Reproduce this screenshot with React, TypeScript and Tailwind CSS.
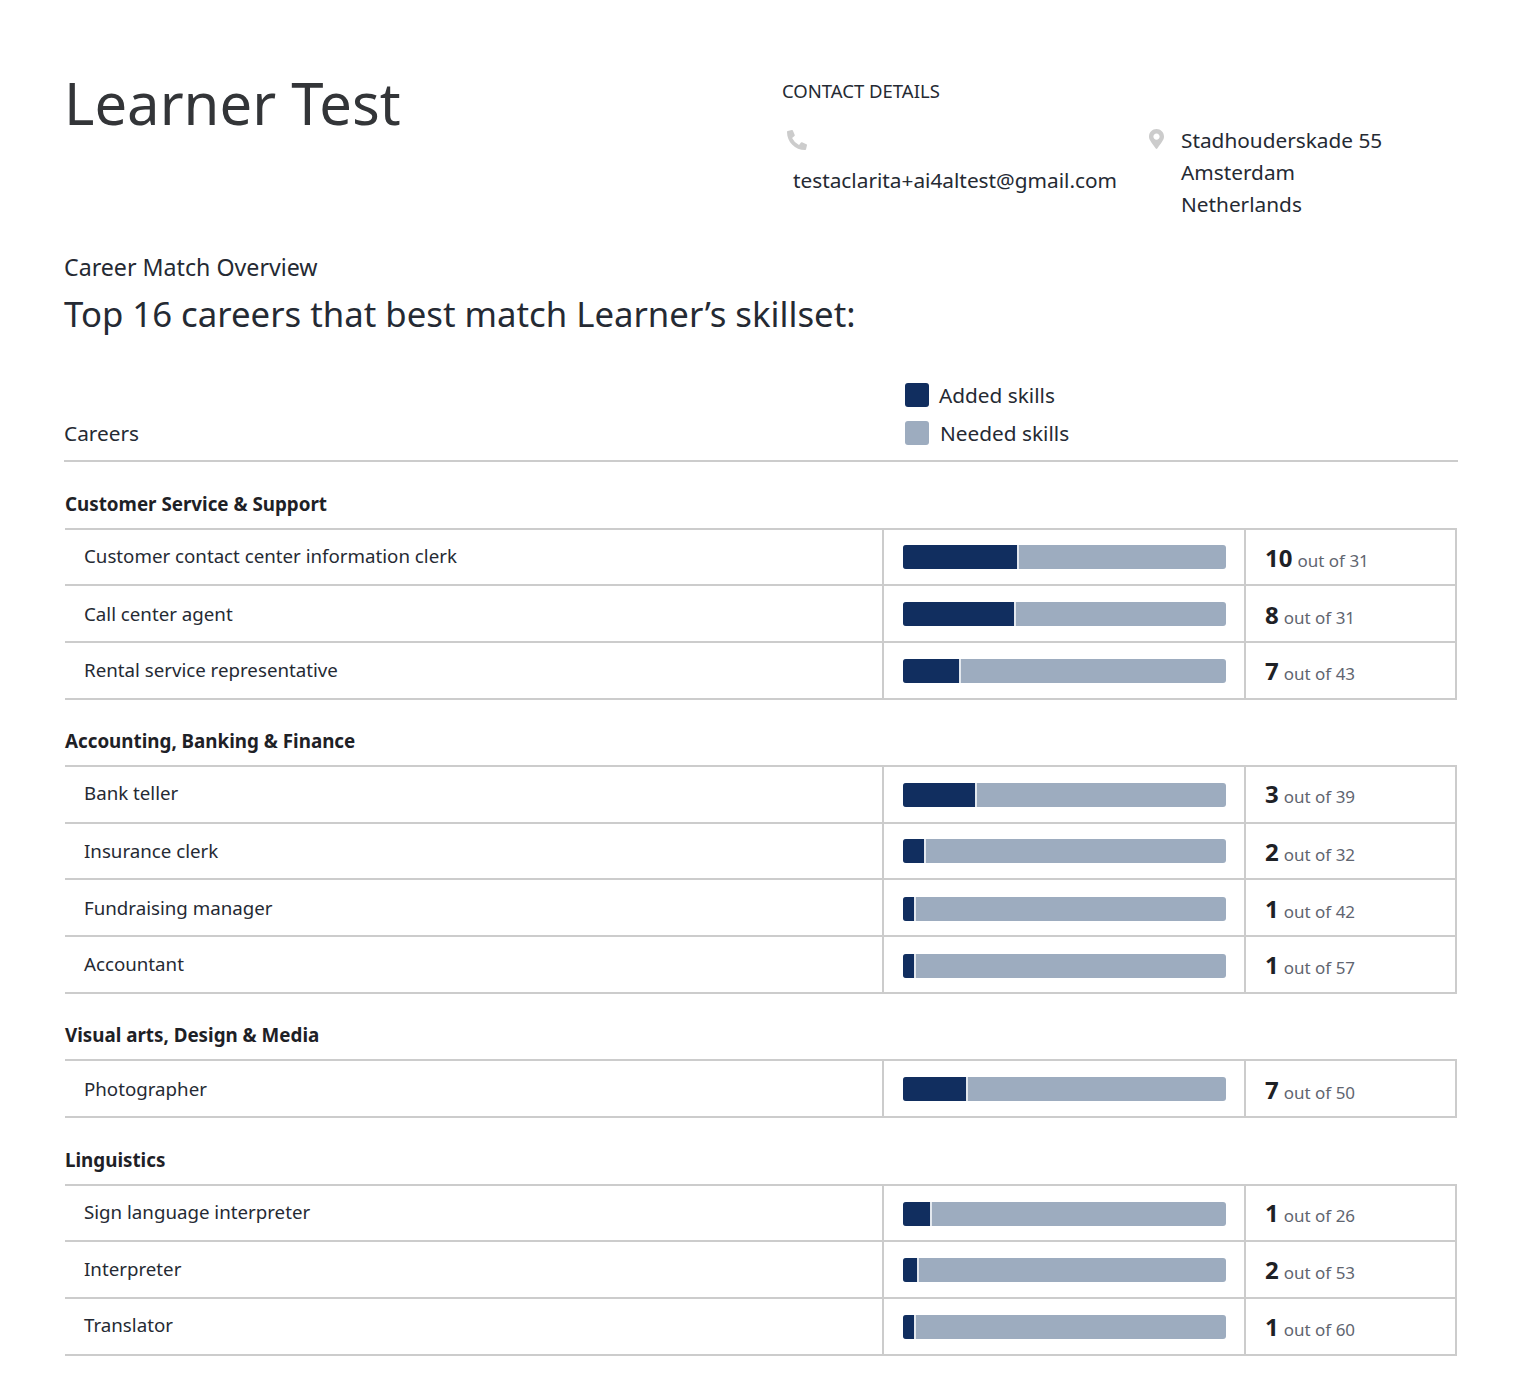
import React from "react";
import { FaPhoneAlt, FaMapMarkerAlt } from "react-icons/fa";

type Row = { name: string; n: number; total: number; w: number; h: string; t: string; b: string; c: string };
type Group = { title: string; rows: Row[]; titleClass: string };

const groups: Group[] = [
  {
    title: "Customer Service & Support",
    titleClass: "mt-[29px]",
    rows: [
      { name: "Customer contact center information clerk", n: 10, total: 31, w: 115, h: "h-[56px]", t: "pt-[13px]", b: "pt-[15px]", c: "pt-[12px]" },
      { name: "Call center agent", n: 8, total: 31, w: 112, h: "h-[57px]", t: "pt-[15px]", b: "pt-[16px]", c: "pt-[13px]" },
      { name: "Rental service representative", n: 7, total: 43, w: 57, h: "h-[57px]", t: "pt-[14px]", b: "pt-[16px]", c: "pt-[12px]" },
    ],
  },
  {
    title: "Accounting, Banking & Finance",
    titleClass: "mt-[28px]",
    rows: [
      { name: "Bank teller", n: 3, total: 39, w: 73, h: "h-[57px]", t: "pt-[13px]", b: "pt-[16px]", c: "pt-[11px]" },
      { name: "Insurance clerk", n: 2, total: 32, w: 22, h: "h-[56px]", t: "pt-[14px]", b: "pt-[15px]", c: "pt-[12px]" },
      { name: "Fundraising manager", n: 1, total: 42, w: 12, h: "h-[57px]", t: "pt-[15px]", b: "pt-[17px]", c: "pt-[13px]" },
      { name: "Accountant", n: 1, total: 57, w: 12, h: "h-[57px]", t: "pt-[14px]", b: "pt-[17px]", c: "pt-[12px]" },
    ],
  },
  {
    title: "Visual arts, Design & Media",
    titleClass: "mt-[28px]",
    rows: [
      { name: "Photographer", n: 7, total: 50, w: 64, h: "h-[57px]", t: "pt-[15px]", b: "pt-[16px]", c: "pt-[13px]" },
    ],
  },
  {
    title: "Linguistics",
    titleClass: "mt-[29px]",
    rows: [
      { name: "Sign language interpreter", n: 1, total: 26, w: 28, h: "h-[56px]", t: "pt-[13px]", b: "pt-[16px]", c: "pt-[11px]" },
      { name: "Interpreter", n: 2, total: 53, w: 15, h: "h-[57px]", t: "pt-[14px]", b: "pt-[16px]", c: "pt-[12px]" },
      { name: "Translator", n: 1, total: 60, w: 12, h: "h-[57px]", t: "pt-[13px]", b: "pt-[16px]", c: "pt-[12px]" },
    ],
  },
];

function CareerRow({ row }: { row: Row }) {
  return (
    <div className={`grid grid-cols-[817px_362px_213px] ${row.h} border-b-2 border-[#cccccc]`}>
      <div className={`pl-[19px] text-[18.72px] leading-[26px] text-[#252a33] ${row.t}`}>{row.name}</div>
      <div className={`border-l-2 border-[#cccccc] pl-[19px] ${row.b}`}>
        <div className="flex h-6 w-[323px] rounded-[3px] overflow-hidden bg-[#9dacbf]">
          <div className="h-full bg-[#112e5f] border-r-2 border-[#e3e8ee] box-content" style={{ width: row.w - 1 }} />
        </div>
      </div>
      <div className={`flex items-baseline border-x-2 border-[#cccccc] pl-[19px] ${row.c}`}>
        <span className="text-[24px] font-bold text-[#1e2126] leading-[32px]">{row.n}</span>
        <span className="ml-[5px] text-[17px] text-[#5f6570]">out of {row.total}</span>
      </div>
    </div>
  );
}

export default function App() {
  return (
    <div className="w-[1520px] h-[1384px] bg-white font-['Noto_Sans',sans-serif] text-[#252a33] pl-[64px] overflow-hidden">
      <div className="flex h-[238px]">
        <div className="w-[718px] pt-[64px]">
          <h1 className="text-[58px] leading-[78px] text-[#333538]">Learner Test</h1>
        </div>
        <div className="pt-[78px]">
          <div className="text-[18.5px] leading-[25px]">CONTACT DETAILS</div>
          <div className="flex mt-[25px]">
            <div className="w-[367px]">
              <FaPhoneAlt className="ml-[5px] mt-[2px] w-5 h-5 text-[#cccccc]" />
              <div className="ml-[11px] mt-[14px] text-[20.8px] leading-[32px]">testaclarita+ai4altest@gmail.com</div>
            </div>
            <FaMapMarkerAlt className="mt-[1px] w-[15px] h-5 text-[#cccccc] shrink-0" />
            <div className="ml-[17px] -mt-[4px] text-[20.8px] leading-[32px]">
              <div>Stadhouderskade 55</div>
              <div>Amsterdam</div>
              <div>Netherlands</div>
            </div>
          </div>
        </div>
      </div>

      <div className="text-[23.2px] leading-[32px] mt-[13px]">Career Match Overview</div>
      <h2 className="text-[34.75px] leading-[48px] mt-[7px]">Top 16 careers that best match Learner’s skillset:</h2>

      <div className="w-[1394px] h-[88px] mt-[36px] border-b-2 border-[#cccccc] flex">
        <div className="w-[841px] text-[20.8px] leading-[32px] mt-[43px]">Careers</div>
        <div className="text-[20.8px] leading-[32px] mt-[5px]">
          <div className="flex items-center">
            <span className="w-6 h-6 rounded-[3px] bg-[#112e5f] mr-[10px]" />
            Added skills
          </div>
          <div className="flex items-center mt-[6px]">
            <span className="w-6 h-6 rounded-[3px] bg-[#9dacbf] mr-[11px]" />
            Needed skills
          </div>
        </div>
      </div>

      <div className="pl-[1px]">
        {groups.map((g) => (
          <section key={g.title}>
            <div className={`${g.titleClass} text-[18.8px] font-bold leading-[26px] text-[#1e2126] h-[37px]`}>{g.title}</div>
            <div className="w-[1392px] border-t-2 border-[#cccccc]">
              {g.rows.map((r) => (
                <CareerRow key={r.name} row={r} />
              ))}
            </div>
          </section>
        ))}
      </div>
    </div>
  );
}
